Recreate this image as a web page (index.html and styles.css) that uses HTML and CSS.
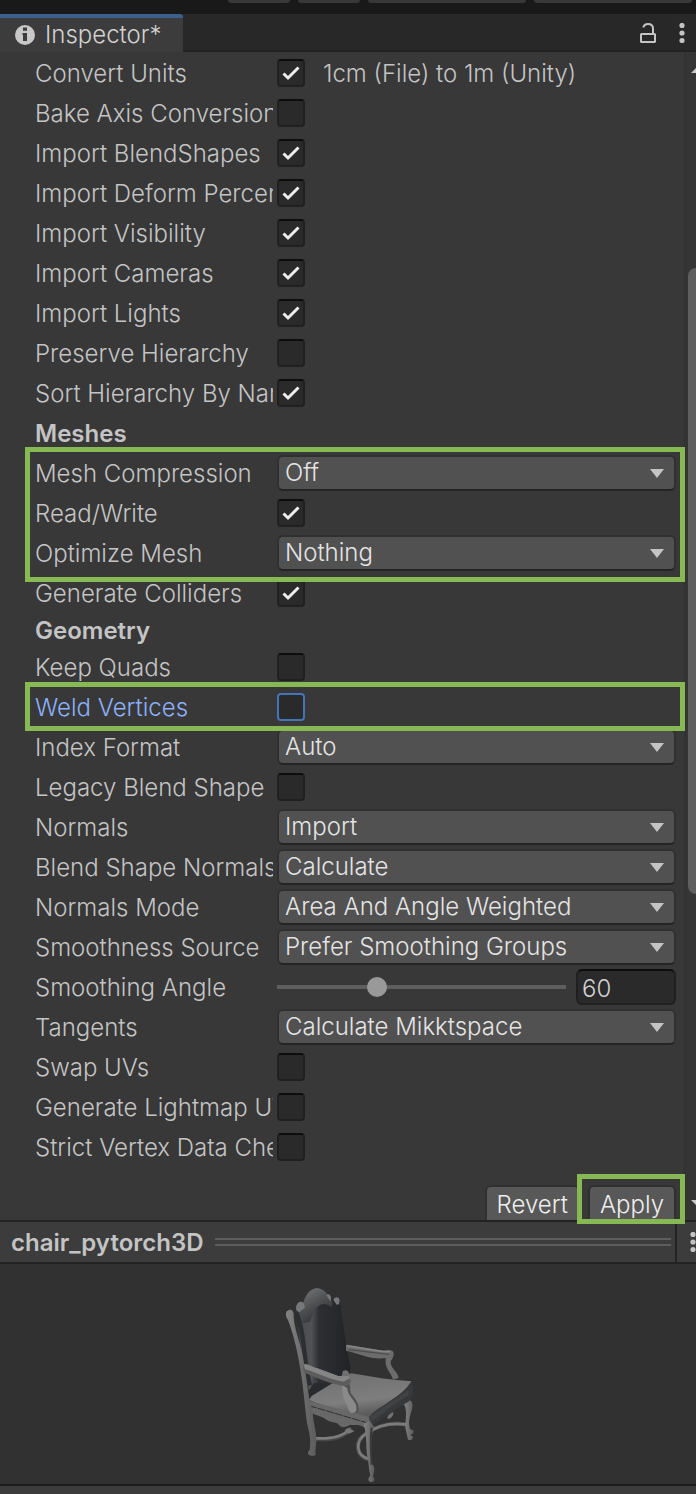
FILE: index.html
```
<!DOCTYPE html>
<html lang="en">
<head>
<meta charset="utf-8">
<title>Inspector</title>
<link rel="stylesheet" href="styles.css">
</head>
<body>
<div class="toolbar"><i class="stub short"></i><i class="stub short"></i><i class="stub"></i><i class="stub"></i></div>
<header class="tabs">
  <button class="tab" type="button">
    <svg width="20" height="20" viewBox="0 0 20 20" aria-hidden="true"><circle cx="10" cy="10" r="10" fill="#c8c8c8"/><path d="M8 2.600h4v3.200H8zM7.500 8H12v8H8v-6h-.5z" fill="#3c3c3c"/></svg>
    <span>Inspector*</span>
  </button>
  <div class="tools">
    <button class="icon" type="button" aria-label="Lock"><svg width="16" height="20" viewBox="0 0 16 20" fill="none" stroke="#c4c4c4" stroke-width="2"><rect x="1" y="11" width="14" height="8" rx=".5"/><path d="M3.300 4.500C3.800 2.300 5.700 1 8 1c3.200 0 5 1.800 5 4.600V11"/></svg></button>
    <button class="icon" type="button" aria-label="Menu"><svg width="6" height="20" viewBox="0 0 6 20" fill="#c4c4c4"><circle cx="3" cy="2.500" r="2.600"/><circle cx="3" cy="10" r="2.600"/><circle cx="3" cy="17.500" r="2.600"/></svg></button>
  </div>
</header>

<main class="pane">
  <form class="settings">
    <div class="row"><label for="units">Convert Units</label><input id="units" type="checkbox" checked><span class="note">1cm (File) to 1m (Unity)</span></div>
    <div class="row"><label for="bake">Bake Axis Conversion</label><input id="bake" type="checkbox"></div>
    <div class="row"><label for="shapes">Import BlendShapes</label><input id="shapes" type="checkbox" checked></div>
    <div class="row"><label for="deform">Import Deform Percent</label><input id="deform" type="checkbox" checked></div>
    <div class="row"><label for="vis">Import Visibility</label><input id="vis" type="checkbox" checked></div>
    <div class="row"><label for="cams">Import Cameras</label><input id="cams" type="checkbox" checked></div>
    <div class="row"><label for="lights">Import Lights</label><input id="lights" type="checkbox" checked></div>
    <div class="row"><label for="hier">Preserve Hierarchy</label><input id="hier" type="checkbox"></div>
    <div class="row"><label for="sort">Sort Hierarchy By Name</label><input id="sort" type="checkbox" checked></div>
    <h2 class="title">Meshes</h2>
    <div class="marked marked-group">
      <div class="row"><label for="comp">Mesh Compression</label><span class="drop"><select id="comp"><option>Off</option></select></span></div>
      <div class="row"><label for="rw">Read/Write</label><input id="rw" type="checkbox" checked></div>
      <div class="row"><label for="opt">Optimize Mesh</label><span class="drop"><select id="opt"><option>Nothing</option></select></span></div>
    </div>
    <div class="row"><label for="coll">Generate Colliders</label><input id="coll" type="checkbox" checked></div>
    <h2 class="title compact">Geometry</h2>
    <div class="row"><label for="quads">Keep Quads</label><input id="quads" type="checkbox"></div>
    <div class="marked">
      <div class="row active"><label for="weld">Weld Vertices</label><input id="weld" type="checkbox"></div>
    </div>
    <div class="row"><label for="index">Index Format</label><span class="drop"><select id="index"><option>Auto</option></select></span></div>
    <div class="row"><label for="legacy">Legacy Blend Shape</label><input id="legacy" type="checkbox"></div>
    <div class="row"><label for="normals">Normals</label><span class="drop"><select id="normals"><option>Import</option></select></span></div>
    <div class="row"><label for="bsn">Blend Shape Normals</label><span class="drop"><select id="bsn"><option>Calculate</option></select></span></div>
    <div class="row"><label for="mode">Normals Mode</label><span class="drop"><select id="mode"><option>Area And Angle Weighted</option></select></span></div>
    <div class="row"><label for="source">Smoothness Source</label><span class="drop"><select id="source"><option>Prefer Smoothing Groups</option></select></span></div>
    <div class="row"><label for="angle">Smoothing Angle</label><input id="angle" type="range" min="0" max="180" value="60"><input class="number" type="text" value="60" aria-label="Smoothing Angle value"></div>
    <div class="row"><label for="tan">Tangents</label><span class="drop"><select id="tan"><option>Calculate Mikktspace</option></select></span></div>
    <div class="row"><label for="swap">Swap UVs</label><input id="swap" type="checkbox"></div>
    <div class="row"><label for="lightmap">Generate Lightmap UVs</label><input id="lightmap" type="checkbox"></div>
    <div class="row"><label for="strict">Strict Vertex Data Checks</label><input id="strict" type="checkbox"></div>
    <div class="actions">
      <button type="button">Revert</button>
      <span class="marked marked-button"><button type="button">Apply</button></span>
    </div>
  </form>
  <div class="scroll" aria-hidden="true">
    <svg width="14" height="7" viewBox="0 0 14 7"><path d="M0 7 7 0l7 7z" fill="#c8c8c8"/></svg>
    <div class="track"><div class="thumb"></div></div>
    <svg width="14" height="7" viewBox="0 0 14 7"><path d="M0 0 7 7l7-7z" fill="#c8c8c8"/></svg>
  </div>
</main>

<section class="preview">
  <header class="preview-head">
    <h2>chair_pytorch3D</h2>
    <div class="grip"></div>
    <button class="icon more" type="button" aria-label="Preview menu"><svg width="6" height="20" viewBox="0 0 6 20" fill="#c4c4c4"><circle cx="3" cy="2.500" r="2.600"/><circle cx="3" cy="10" r="2.600"/><circle cx="3" cy="17.500" r="2.600"/></svg></button>
  </header>
  <div class="stage">
    <svg width="160" height="220" viewBox="-6 -18 480 660" role="img" aria-label="Chair model">
      <defs>
        <linearGradient id="back" x1="0" x2="1" y1="0" y2="0"><stop offset="0" stop-color="#48494c"/><stop offset=".28" stop-color="#515255"/><stop offset=".42" stop-color="#2e2f33"/><stop offset="1" stop-color="#222327"/></linearGradient>
        <linearGradient id="crest" x1="0" x2=".5" y1="0" y2="1"><stop offset="0" stop-color="#77787a"/><stop offset=".5" stop-color="#505153"/><stop offset="1" stop-color="#303134"/></linearGradient>
        <linearGradient id="seat" x1="0" x2=".3" y1="0" y2="1"><stop offset="0" stop-color="#6e6e6e"/><stop offset=".7" stop-color="#7e7e7e"/><stop offset="1" stop-color="#5c5c5c"/></linearGradient>
        <linearGradient id="wood" x1="0" x2="1" y1="0" y2="0"><stop offset="0" stop-color="#838383"/><stop offset="1" stop-color="#5c5c5c"/></linearGradient>
      </defs>
      <g fill="none" stroke-linecap="round" stroke-linejoin="round">
        <path d="M139 507c50 3 84-7 101-29M300 570c-43-10-49-57-12-79 38-28 76-35 119-28" stroke="#484848" stroke-width="13"/>
        <path d="M139 505c50 2 81-7 99-27M298 567c-40-9-45-53-9-77 38-27 75-32 117-27" stroke="#7c7c7c" stroke-width="8"/>
      </g>
      <path d="M402 392c14-8 29 0 25 20-5 27-14 37-7 65l11 5-2 9-8 3 9 8-6 9-10-2-6-27c-7-22 8-50-6-80z" fill="url(#wood)"/>
      <path d="M78 120 86 98 99 100C107 71 121 56 143 54 161 56 173 72 177 78L182 86 192 86 209 88 213 120 231 241 242 290 238 312 222 318 119 370 101 300z" fill="url(#back)"/>
      <path d="M98 110C105 76 119 56 143 54 164 57 179 77 188 100L184 112C166 95 145 101 132 124L120 155 97 160z" fill="url(#crest)"/>
      <path d="M78 116c0-19 14-25 23-17l4 14-20 16zM169 76c5-7 13-2 14 7l-1 12zM190 90c4-12 18-10 19 2l-2 11-7 1z" fill="#77787a"/>
      <path d="M78 126c27 57 23 156 42 220" fill="none" stroke="#2c2e31" stroke-width="13"/>
      <path d="M112 370 130 340 185 338 184 344 118 386z" fill="#292a2d"/>
      <path d="M228 225 338 242 361 241C373 242 373 254 368 265L362 274C360 295 383 304 386 324L369 329C362 303 344 300 347 264 304 270 268 251 228 242z" fill="#6c6c6c"/>
      <path d="m230 227 110 18 20-1" fill="none" stroke="#858585" stroke-width="5"/>
      <path d="m235 239 122 14" fill="none" stroke="#4c4c4c" stroke-width="4"/>
      <path d="M218 304c9-7 19-3 21 12l-23 2z" fill="#707070"/>
      <path d="M117 390 125 378 187 340C202 332 222 320 244 310 306 321 363 330 424 334 407 365 374 384 344 405 325 416 311 428 296 442 239 428 167 412 117 390z" fill="url(#seat)"/>
      <path d="M425 334C434 358 430 377 417 394 384 416 358 426 310 466L297 441C310 426 325 415 345 404 375 384 407 364 425 334z" fill="#37383a"/>
      <path d="M298 440 346 407 417 359 414 375 364 409 304 456z" fill="#414244"/>
      <path d="M371 426c-3 20-13 21-19 20 0-11 8-16 19-20z" fill="#707070"/>
      <path d="M112 391 297 441 302 467 299 497C285 464 271 464 239 465 225 473 214 476 202 460 187 456 185 457 172 451 153 437 141 438 121 427z" fill="#686868"/>
      <path d="m117 407 176 52" fill="none" stroke="#303030" stroke-width="3" stroke-dasharray="24 3"/>
      <path d="M50 124C59 115 70 119 71 132 69 157 83 198 90 223 105 280 108 329 118 385L129 433C128 452 139 478 139 512L136 546C140 556 133 559 123 557 111 555 112 546 119 540 126 497 111 475 108 436 100 353 88 238 54 150 47 142 46 131 50 124z" fill="url(#wood)"/>
      <path d="m281 462 18-11 13 19c-11 34-6 70-6 107 0 9 8 10 7 22l-4 20c8 13 2 17-4 17-11 0-13-11-4-19l-4-20-2-23c-10-38-2-73-14-112z" fill="url(#wood)"/>
      <path d="M305 473c-6 48-1 72 0 111" stroke="#383838" stroke-width="6" fill="none"/>
      <path d="M218 345C222 367 224 379 230 394 239 404 232 424 248 430L265 426C269 402 256 385 242 370L239 342z" fill="#515151"/>
      <path d="M216 345C218 368 217 380 226 397 235 407 231 421 244 429 259 430 263 420 257 402 250 387 232 374 232 354z" fill="#8a8a8a"/>
      <path d="M101 284C112 279 123 290 142 295L207 319C222 315 240 316 242 331 243 343 232 350 218 347 178 342 146 326 106 310 99 304 97 292 101 284z" fill="#5c5c5c"/>
      <path d="M101 284C112 279 123 290 142 295L207 319C222 315 238 316 240 325L220 335C177 328 145 310 105 298z" fill="#858585"/>
      <path d="M232 475c-12 7-9 14 5 16l17-8z" fill="#777"/>
    </svg>
  </div>
</section>
<footer class="bottom"></footer>
</body>
</html>
```
FILE: styles.css
```
* { box-sizing: border-box; }
body {
  margin: 0;
  min-height: 100vh;
  display: flex;
  flex-direction: column;
  overflow-x: hidden;
  background: #383838;
  color: #c4c4c4;
  font: 300 24px/30px Inter, "Liberation Sans", sans-serif;
}
button, input, select { margin: 0; color: inherit; font: inherit; }
button { border: 0; background: none; padding: 0; }
h2 { margin: 0; font-size: 24px; line-height: 30px; font-weight: 600; }

.toolbar { display: flex; gap: 8px; height: 14px; padding: 0 4px 0 228px; background: #191919; }
.stub { flex: 158 1 0; height: 3px; border-radius: 0 0 3px 3px; background: #383838; }
.stub.short { flex-grow: 62; }

.tabs { display: flex; justify-content: space-between; height: 38px; background: #282828; box-shadow: inset 0 -2px #232323; }
.tab { display: flex; align-items: center; gap: 10px; padding: 0 22px 0 15px; border-top: 4px solid #3a5f8d; border-radius: 0 3px 0 0; background: #3c3c3c; color: #d2d2d2; }
.tools { display: flex; align-items: center; gap: 23px; padding-right: 11px; }
.icon { display: flex; align-items: center; }

.pane { display: flex; }
.settings { flex: 1; min-width: 0; padding: 1px 8px 0 35px; }
.row { display: flex; align-items: center; height: 40px; }
.row label { flex: 0 0 238px; margin-right: 4px; padding-top: 2px; overflow: hidden; white-space: nowrap; }
.title { padding: 6px 0 4px; }
.title.compact { padding: 3px 0 1px; }
.note { margin-left: 18px; padding-top: 2px; }

input[type="checkbox"] {
  appearance: none;
  flex: none;
  width: 28px;
  height: 28px;
  border: 2px solid #202020;
  border-top-color: #0d0d0d;
  border-radius: 4px;
  background: #2a2a2a;
}
input[type="checkbox"]:checked {
  background: #2a2a2a url("data:image/svg+xml,%3Csvg xmlns='http://www.w3.org/2000/svg' viewBox='0 0 24 24'%3E%3Cpath d='M4.500 12.500l4.500 4.500L19.500 6.500' fill='none' stroke='%23eee' stroke-width='3'/%3E%3C/svg%3E") center / 24px 24px;
}
.active label { color: #8cb0fa; }
.active input[type="checkbox"] { border-color: #4376b9; }

.drop { position: relative; flex: 1; min-width: 0; display: flex; }
.drop::after {
  content: "";
  position: absolute;
  right: 12px;
  top: 14px;
  width: 14px;
  height: 9px;
  background: #c4c4c4;
  clip-path: polygon(0 0, 100% 0, 50% 100%);
  pointer-events: none;
}
select {
  appearance: none;
  width: 100%;
  height: 36px;
  padding: 0 32px 0 6px;
  border: 2px solid #303030;
  border-bottom-color: #242424;
  border-radius: 6px;
  background: #515151;
  color: #e4e4e4;
}

input[type="range"] { appearance: none; flex: 1; min-width: 0; height: 20px; background: linear-gradient(#5e5e5e, #5e5e5e) center / 100% 4px no-repeat; }
input[type="range"]::-webkit-slider-thumb { appearance: none; width: 20px; height: 20px; border-radius: 50%; background: #999; }
.number {
  width: 100px;
  height: 36px;
  margin-left: 10px;
  padding: 2px 4px 0;
  border: 2px solid #202020;
  border-top-color: #0d0d0d;
  border-radius: 6px;
  background: #2a2a2a;
  color: #d2d2d2;
}

.marked { position: relative; z-index: 1; }
.marked::after { content: ""; position: absolute; inset: -5px -9px -4px -10px; border: 5px solid #86b953; pointer-events: none; }
.marked-group::after { inset: -6px -9px -9px -10px; }
.marked-button::after { inset: -11px -9px -4px -11px; }

.actions { display: flex; justify-content: flex-end; gap: 8px; padding-top: 18px; }
.actions button {
  display: block;
  height: 35px;
  padding: 2px 10px 0;
  border: 2px solid #303030;
  border-bottom: 0;
  border-radius: 6px 6px 0 0;
  background: #585858;
  color: #eee;
}

.scroll { display: flex; flex-direction: column; width: 12px; padding: 14px 0 13px; border-left: 2px solid #323232; background: #353535; }
.scroll svg { flex: none; margin-left: 5px; }
.track { flex: 1; display: flex; flex-direction: column; margin: 0 0 0 2px; }
.track::before { content: ""; flex: 195; }
.track::after { content: ""; flex: 306; }
.thumb { flex: 626; width: 16px; border-radius: 8px; background: #5f5f5f; }

.preview { flex: 1; display: flex; flex-direction: column; background: #313131; }
.preview-head { display: flex; align-items: center; height: 44px; padding-left: 11px; border: solid #232323; border-width: 2px 0; background: #3c3c3c; }
.preview-head h2 { padding-top: 2px; }
.grip { flex: 1; height: 8px; margin: 0 4px 0 11px; border: solid #5e5e5e; border-width: 2px 0; }
.more { align-self: stretch; width: 21px; padding-left: 13px; border-left: 2px solid #232323; }
.more svg { flex: none; }
.stage { flex: 1; display: flex; justify-content: center; align-items: center; }
.bottom { height: 10px; border-top: 2px solid #1d1d1d; background: #3c3c3c; }
```
